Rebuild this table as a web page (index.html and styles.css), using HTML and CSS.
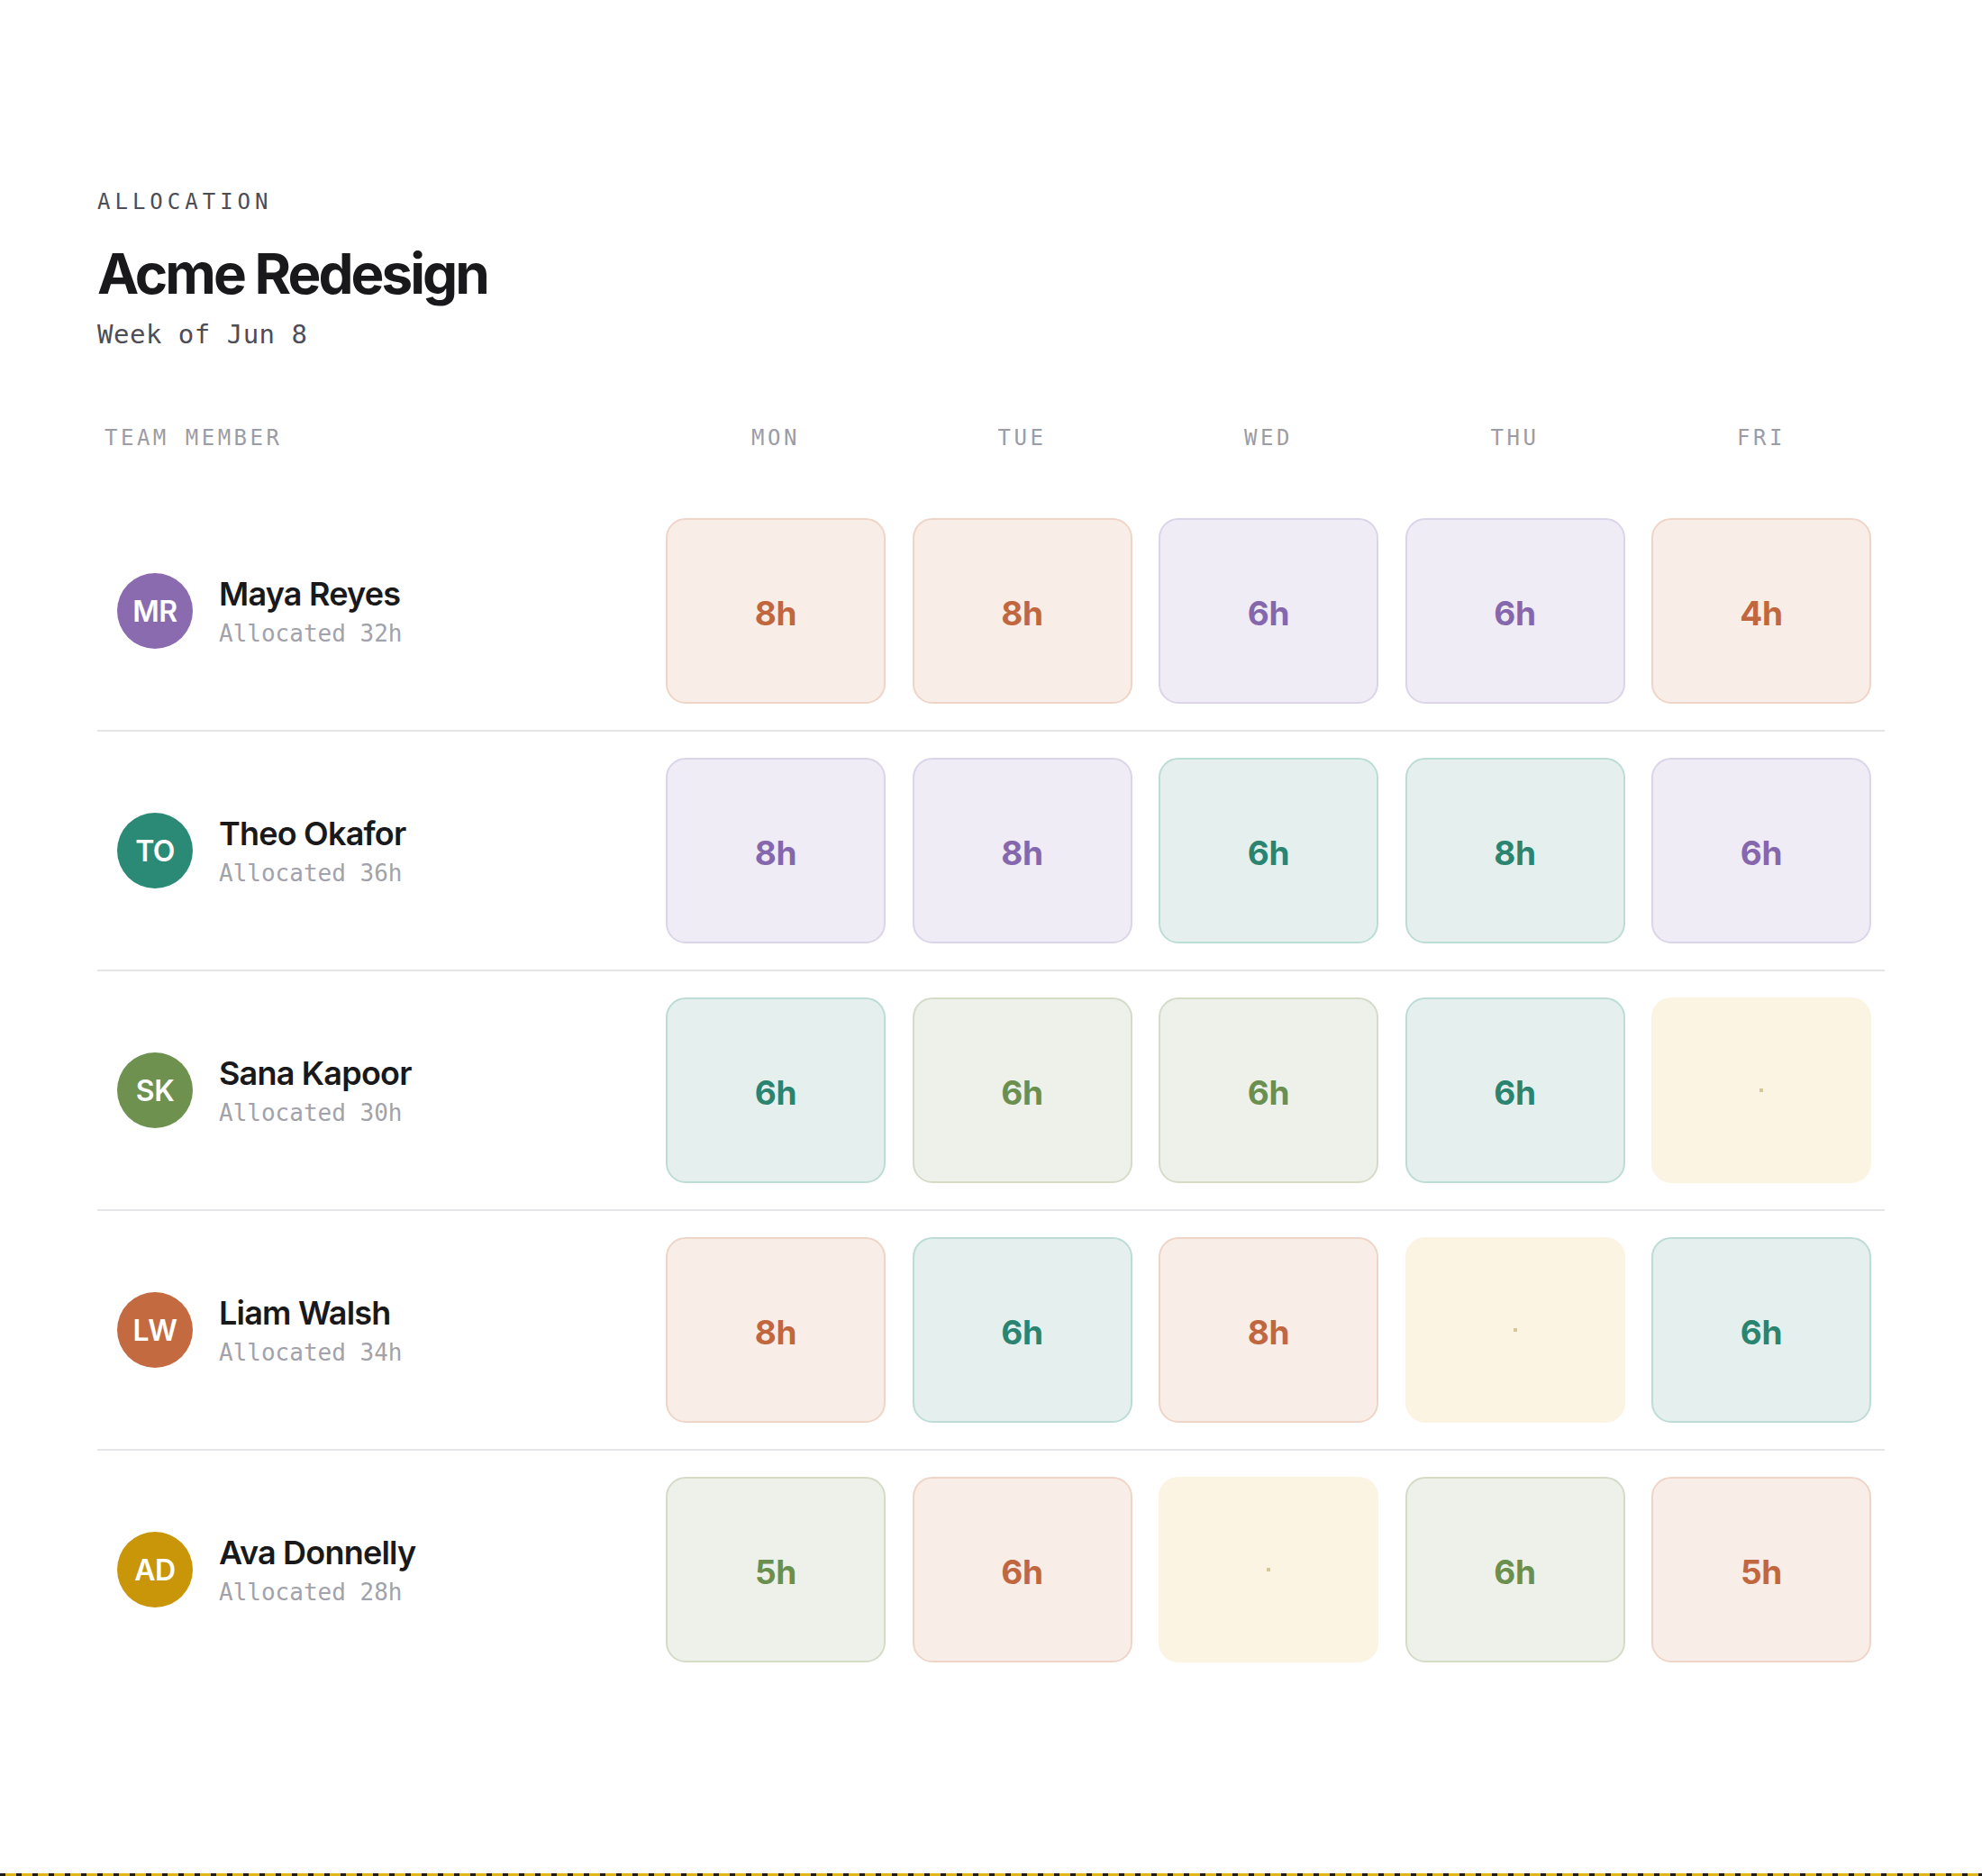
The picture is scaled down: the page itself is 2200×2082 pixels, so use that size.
FILE: index.html
```html
<!DOCTYPE html>
<html lang="en">
<head>
<meta charset="utf-8">
<title>Acme Redesign — Allocation</title>
<link rel="stylesheet" href="styles.css">
</head>
<body>
<main class="page">
  <header class="intro">
    <div class="eyebrow">ALLOCATION</div>
    <h1 class="title">Acme Redesign</h1>
    <div class="week">Week of Jun 8</div>
  </header>

  <section class="table">
    <div class="thead">
      <div class="th th-member">TEAM MEMBER</div>
      <div class="th">MON</div>
      <div class="th">TUE</div>
      <div class="th">WED</div>
      <div class="th">THU</div>
      <div class="th">FRI</div>
    </div>

    <div class="row">
      <div class="member">
        <div class="avatar av-purple">MR</div>
        <div class="who"><div class="name">Maya Reyes</div><div class="alloc">Allocated 32h</div></div>
      </div>
      <div class="cell c-orange">8h</div>
      <div class="cell c-orange">8h</div>
      <div class="cell c-purple">6h</div>
      <div class="cell c-purple">6h</div>
      <div class="cell c-orange">4h</div>
    </div>

    <div class="row">
      <div class="member">
        <div class="avatar av-teal">TO</div>
        <div class="who"><div class="name">Theo Okafor</div><div class="alloc">Allocated 36h</div></div>
      </div>
      <div class="cell c-purple">8h</div>
      <div class="cell c-purple">8h</div>
      <div class="cell c-teal">6h</div>
      <div class="cell c-teal">8h</div>
      <div class="cell c-purple">6h</div>
    </div>

    <div class="row">
      <div class="member">
        <div class="avatar av-green">SK</div>
        <div class="who"><div class="name">Sana Kapoor</div><div class="alloc">Allocated 30h</div></div>
      </div>
      <div class="cell c-teal">6h</div>
      <div class="cell c-green">6h</div>
      <div class="cell c-green">6h</div>
      <div class="cell c-teal">6h</div>
      <div class="cell c-empty"><span class="dot"></span></div>
    </div>

    <div class="row">
      <div class="member">
        <div class="avatar av-orange">LW</div>
        <div class="who"><div class="name">Liam Walsh</div><div class="alloc">Allocated 34h</div></div>
      </div>
      <div class="cell c-orange">8h</div>
      <div class="cell c-teal">6h</div>
      <div class="cell c-orange">8h</div>
      <div class="cell c-empty"><span class="dot"></span></div>
      <div class="cell c-teal">6h</div>
    </div>

    <div class="row row-last">
      <div class="member">
        <div class="avatar av-gold">AD</div>
        <div class="who"><div class="name">Ava Donnelly</div><div class="alloc">Allocated 28h</div></div>
      </div>
      <div class="cell c-green">5h</div>
      <div class="cell c-orange">6h</div>
      <div class="cell c-empty"><span class="dot"></span></div>
      <div class="cell c-green">6h</div>
      <div class="cell c-orange">5h</div>
    </div>
  </section>
</main>
<div class="tape"></div>
</body>
</html>
```

FILE: styles.css
```css
* { box-sizing: border-box; }

html, body { height: 100%; }

body {
  margin: 0;
  background: #ffffff;
  font-family: "Inter", "Noto Sans", sans-serif;
  color: #1a1a1c;
  display: flex;
  flex-direction: column;
  min-height: 100vh;
}

.page {
  flex: 1;
  padding: 212px 108px 0 108px;
}

.intro { display: flex; flex-direction: column; }

.eyebrow {
  font-family: "DejaVu Sans Mono", "Liberation Mono", monospace;
  font-size: 24px;
  line-height: 24px;
  letter-spacing: 5px;
  color: #4d4d56;
}

.title {
  margin: 37px 0 0 0;
  font-size: 62px;
  line-height: 62px;
  font-weight: 700;
  letter-spacing: -3px;
  color: #19191b;
}

.week {
  margin-top: 22px;
  font-family: "DejaVu Sans Mono", "Liberation Mono", monospace;
  font-size: 29px;
  line-height: 29px;
  letter-spacing: 0.5px;
  color: #4d4d56;
}

.table { margin-top: 88px; }

.thead,
.row {
  display: grid;
  grid-template-columns: 1fr repeat(5, 244px);
  column-gap: 29.5px;
}

.thead {
  padding: 0 15px 0 8px;
  margin-bottom: 48px;
}

.th {
  font-family: "DejaVu Sans Mono", "Liberation Mono", monospace;
  font-size: 24px;
  line-height: 24px;
  letter-spacing: 3.5px;
  color: #9c9ca5;
  text-align: center;
}

.th-member { text-align: left; }

.row {
  padding: 29px 15px 29px 22px;
  border-bottom: 2px solid #e6e6e8;
  align-items: center;
}

.row-last { border-bottom: none; }

.member {
  display: flex;
  align-items: center;
  gap: 29px;
}

.avatar {
  width: 84px;
  height: 84px;
  border-radius: 50%;
  display: flex;
  align-items: center;
  justify-content: center;
  color: #ffffff;
  font-size: 32px;
  font-weight: 600;
  letter-spacing: -0.5px;
  flex-shrink: 0;
}

.av-purple { background: #8a6bb0; }
.av-teal { background: #2a8a76; }
.av-green { background: #6e9150; }
.av-orange { background: #c46a40; }
.av-gold { background: #c9960a; }

.who { display: flex; flex-direction: column; }

.name {
  font-size: 36px;
  line-height: 44px;
  font-weight: 600;
  letter-spacing: -0.8px;
  color: #19191b;
}

.alloc {
  margin-top: 6px;
  font-family: "DejaVu Sans Mono", "Liberation Mono", monospace;
  font-size: 26px;
  line-height: 32px;
  color: #a2a2aa;
}

.cell {
  height: 206px;
  border-radius: 22px;
  border: 2px solid transparent;
  display: flex;
  align-items: center;
  justify-content: center;
  padding-top: 5px;
  font-size: 37px;
  font-weight: 700;
  letter-spacing: -0.3px;
}

.c-orange { background: #f8ede7; border-color: #efd5c7; color: #c0673f; }
.c-purple { background: #f0ecf5; border-color: #dcd4e8; color: #8467ad; }
.c-teal { background: #e5f0ee; border-color: #bcdcd5; color: #2a8470; }
.c-green { background: #eef0ea; border-color: #d4dcc8; color: #6a8f4e; }
.c-empty { background: #fbf4e2; border-color: #fbf4e2; padding-top: 0; }

.dot {
  width: 4px;
  height: 4px;
  background: #d4c89a;
}

.tape {
  height: 3px;
  flex-shrink: 0;
  background: repeating-linear-gradient(90deg, #1d1d1b 0 6px, #e0b61a 6px 18px);
}
```
